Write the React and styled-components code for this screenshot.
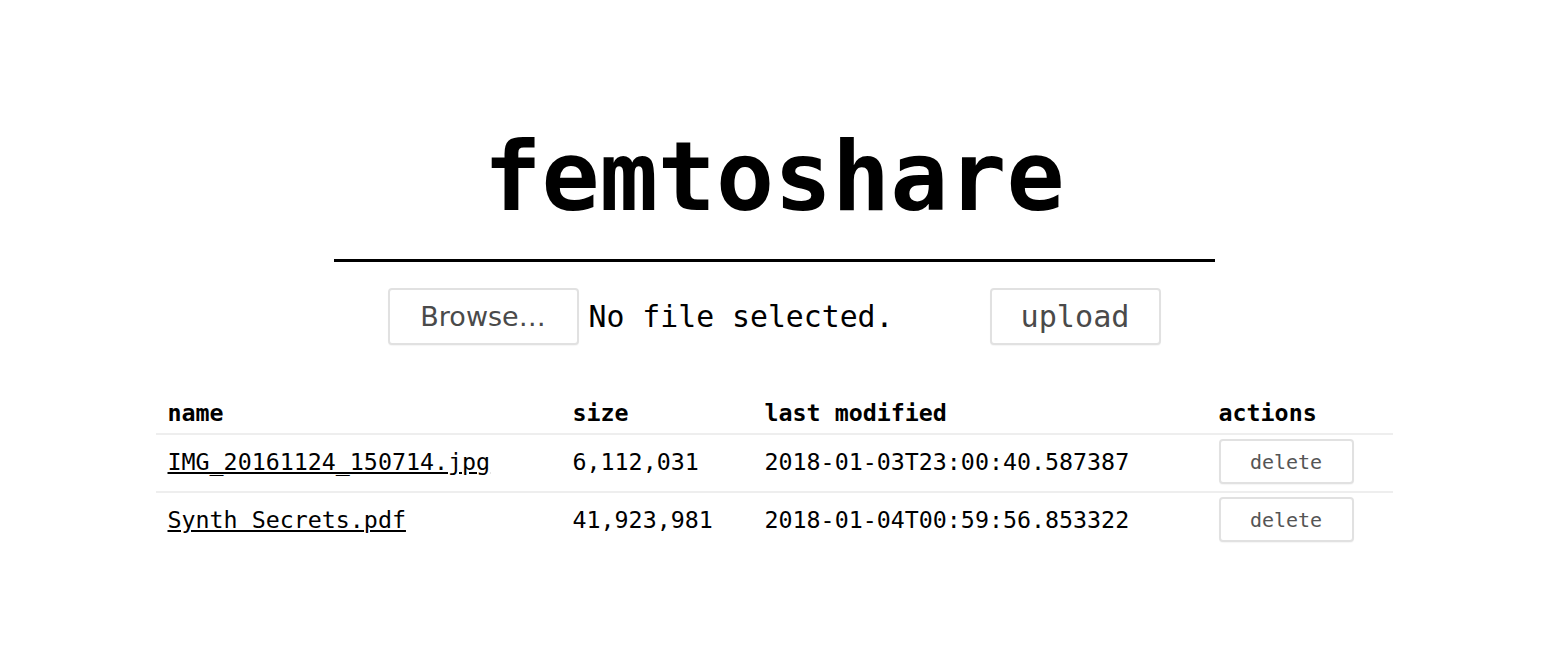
import React from "react"
import styled, { createGlobalStyle } from "styled-components"

const files = [
  {
    name: "IMG_20161124_150714.jpg",
    size: "6,112,031",
    modified: "2018-01-03T23:00:40.587387",
  },
  {
    name: "Synth Secrets.pdf",
    size: "41,923,981",
    modified: "2018-01-04T00:59:56.853322",
  },
]

const App = () => (
  <>
    <GlobalStyle />
    <PageStyle>
      <HeaderStyle>
        <TitleStyle>femtoshare</TitleStyle>
      </HeaderStyle>
      <UploadFormStyle onSubmit={e => e.preventDefault()}>
        <FilePickerStyle>
          <BrowseButtonStyle type="button">Browse…</BrowseButtonStyle>
          <FileNameStyle>No file selected.</FileNameStyle>
        </FilePickerStyle>
        <UploadButtonStyle type="submit">upload</UploadButtonStyle>
      </UploadFormStyle>
      <TableStyle>
        <colgroup>
          <col style={{ width: 405 }} />
          <col style={{ width: 192 }} />
          <col style={{ width: 454 }} />
          <col />
        </colgroup>
        <thead>
          <tr>
            <HeadCellStyle>name</HeadCellStyle>
            <HeadCellStyle>size</HeadCellStyle>
            <HeadCellStyle>last modified</HeadCellStyle>
            <HeadCellStyle>actions</HeadCellStyle>
          </tr>
        </thead>
        <tbody>
          {files.map(file => (
            <RowStyle key={file.name}>
              <CellStyle>
                <FileLinkStyle href="#">{file.name}</FileLinkStyle>
              </CellStyle>
              <CellStyle>{file.size}</CellStyle>
              <CellStyle>{file.modified}</CellStyle>
              <CellStyle>
                <DeleteButtonStyle type="button">delete</DeleteButtonStyle>
              </CellStyle>
            </RowStyle>
          ))}
        </tbody>
      </TableStyle>
    </PageStyle>
  </>
)

const GlobalStyle = createGlobalStyle`
  html, body {
    margin: 0;
    padding: 0;
    background: #fff;
  }
  body {
    font-family: "DejaVu Sans Mono", "Liberation Mono", monospace;
    color: #000;
  }
`

const PageStyle = styled.main`
  display: flex;
  flex-direction: column;
  align-items: center;
  padding-top: 119px;
`

const HeaderStyle = styled.header`
  width: 881px;
  display: flex;
  justify-content: center;
  border-bottom: 3px solid #000;
  padding-bottom: 25px;
`

const TitleStyle = styled.h1`
  margin: 0;
  font-size: 96.5px;
  line-height: 115px;
  font-weight: bold;
`

const UploadFormStyle = styled.form`
  display: flex;
  align-items: center;
  margin-top: 26px;
`

const FilePickerStyle = styled.div`
  display: flex;
  align-items: center;
  gap: 10px;
  width: 590px;
`

const ButtonBase = styled.button`
  height: 57px;
  background: #fff;
  border: 2px solid #e1e1e1;
  border-radius: 4px;
  box-shadow: 0 1px 1px rgba(0, 0, 0, 0.04);
  color: #4a4a4a;
  cursor: pointer;
`

const BrowseButtonStyle = styled(ButtonBase)`
  width: 191px;
  font-family: "DejaVu Sans", "Liberation Sans", sans-serif;
  font-size: 27px;
`

const FileNameStyle = styled.span`
  font-size: 29.8px;
`

const UploadButtonStyle = styled(ButtonBase)`
  width: 171px;
  margin-left: 12px;
  font-family: "DejaVu Sans Mono", monospace;
  font-size: 30.2px;
`

const TableStyle = styled.table`
  width: 1237px;
  margin-top: 48px;
  border-collapse: collapse;
  font-size: 23.3px;
`

const HeadCellStyle = styled.th`
  text-align: left;
  padding: 6px 12px 7px;
  font-weight: bold;
  border-bottom: 2px solid #eee;
`

const RowStyle = styled.tr`
  & + & td {
    border-top: 2px solid #eee;
  }
`

const CellStyle = styled.td`
  padding: 4px 12px 7px;
  vertical-align: middle;
`

const FileLinkStyle = styled.a`
  color: #000;
  text-decoration: underline;
`

const DeleteButtonStyle = styled(ButtonBase)`
  width: 135px;
  height: 45px;
  font-family: "DejaVu Sans Mono", monospace;
  font-size: 20px;
  color: #555;
`

export default App
